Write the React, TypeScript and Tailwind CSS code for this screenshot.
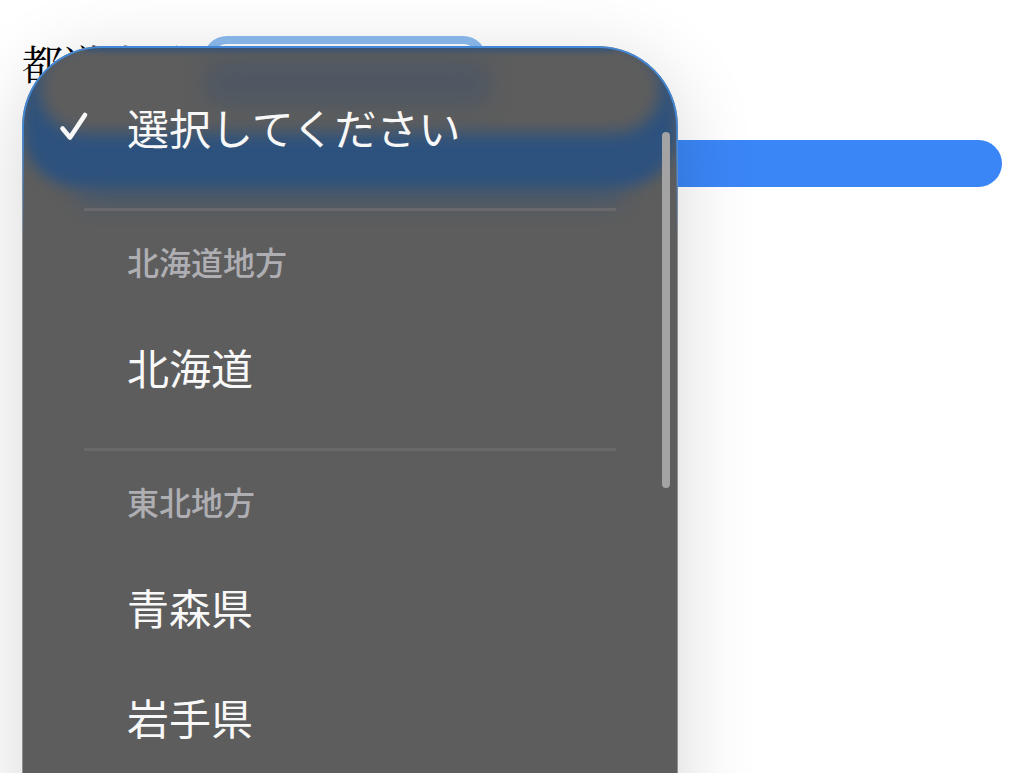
import { useState } from 'react';

const PLACEHOLDER = '選択してください';

const regions = [
  { name: '北海道地方', prefectures: ['北海道'] },
  { name: '東北地方', prefectures: ['青森県', '岩手県'] },
];

type OptionProps = {
  label: string;
  selected: boolean;
  onSelect: () => void;
};

function Option({ label, selected, onSelect }: OptionProps) {
  return (
    <button
      type="button"
      role="option"
      aria-selected={selected}
      onClick={onSelect}
      className="flex h-[110px] w-full items-center gap-9 pl-9 text-left text-[42px] text-[#f8f8f8]"
    >
      <span className="w-8 shrink-0">
        {selected && (
          <svg
            className="h-8 w-8"
            viewBox="0 0 32 32"
            fill="none"
            stroke="currentColor"
            strokeWidth="4.6"
            strokeLinecap="round"
            strokeLinejoin="round"
            aria-hidden="true"
          >
            <path d="M3.5 18.5L11 27.5L26 5" />
          </svg>
        )}
      </span>
      {label}
    </button>
  );
}

// Blurred colours of the form showing through the glass
function GlassTint() {
  return (
    <div className="pointer-events-none absolute inset-0 overflow-hidden rounded-[80px]">
      <div className="absolute inset-x-0 -top-10 h-[180px] rounded-b-[56px] bg-[#2d527e] blur-[7px]" />
      <div className="absolute inset-x-14 top-32 h-7 bg-[#2d527e] opacity-50 blur-[12px]" />
      <div className="absolute inset-x-4 -top-1 h-[90px] rounded-[56px] bg-[#5d5d5d] blur-[8px]" />
      <div className="absolute left-[180px] top-3 h-12 w-[290px] rounded-3xl bg-[#4f5862] blur-[10px]" />
      <div className="absolute inset-x-16 top-0 h-1 bg-[#2d527e] opacity-80 blur-[2px]" />
    </div>
  );
}

export default function App() {
  const [value, setValue] = useState(PLACEHOLDER);

  return (
    <main className="relative h-screen overflow-hidden bg-white px-[22px] pt-9 font-['Noto_Sans_CJK_JP',sans-serif]">
      <form onSubmit={(e) => e.preventDefault()}>
        <div className="flex h-14 items-center gap-[25px]">
          <label
            htmlFor="prefecture"
            className="pb-0.5 font-['Noto_Serif_CJK_JP','Liberation_Serif','Noto_Sans_CJK_JP',serif] text-[41px] text-black"
          >
            都道府県
          </label>
          <select
            id="prefecture"
            value={value}
            onChange={(e) => setValue(e.target.value)}
            className="h-10 w-[268px] appearance-none rounded-2xl bg-white px-4 text-[24px] ring-8 ring-[#8bbcf0] outline-none"
          >
            <option>{PLACEHOLDER}</option>
            {regions.map((region) => (
              <optgroup key={region.name} label={region.name}>
                {region.prefectures.map((name) => (
                  <option key={name}>{name}</option>
                ))}
              </optgroup>
            ))}
          </select>
        </div>
        <button
          type="submit"
          aria-label="送信"
          className="mt-12 block h-[47px] w-full rounded-full bg-[#3b86f7]"
        />
      </form>

      <div
        role="listbox"
        aria-label="都道府県"
        className="absolute left-[22px] top-[46px] min-h-[120vh] w-[656px] rounded-[80px] border border-[#8f8f8f] bg-[#5d5d5d] pt-6 shadow-[0_16px_80px_rgba(0,0,0,0.16)]"
      >
        <GlassTint />
        {/* lit rim along the top edge */}
        <div className="pointer-events-none absolute -inset-px rounded-[80px] border-2 border-[#4388d6] mask-[linear-gradient(black_70px,transparent_190px)]" />

        <div className="relative">
          <Option
            label={PLACEHOLDER}
            selected={value === PLACEHOLDER}
            onSelect={() => setValue(PLACEHOLDER)}
          />
          {regions.map((region) => (
            <div key={region.name} role="group" aria-label={region.name}>
              <div className="mx-[61px] mt-[27px] h-[3px] bg-[#69696b]" />
              <div className="h-[100px] pl-[104px] text-[32px] leading-[100px] font-medium text-[#aeaeb3]">
                {region.name}
              </div>
              {region.prefectures.map((name) => (
                <Option
                  key={name}
                  label={name}
                  selected={value === name}
                  onSelect={() => setValue(name)}
                />
              ))}
            </div>
          ))}
        </div>

        <div className="absolute right-[7px] top-[85px] h-[356px] w-2 rounded-full bg-[#a3a3a3]" />
      </div>
    </main>
  );
}
